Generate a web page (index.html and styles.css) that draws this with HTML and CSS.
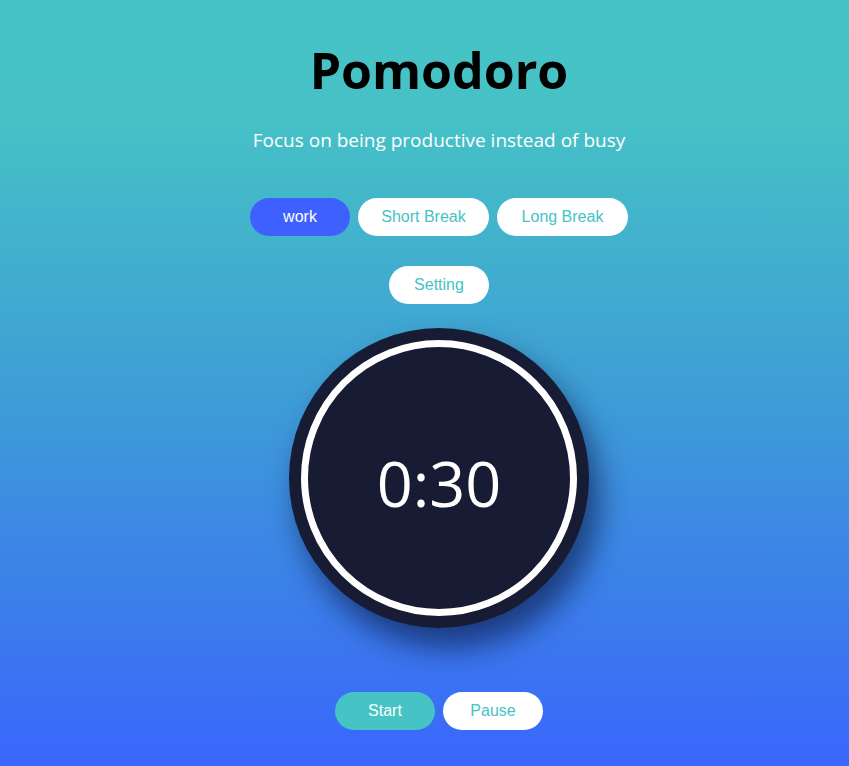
FILE: index.html
```html
<!DOCTYPE html>
<html>
<head>
<meta charset="utf-8">
<title>Pomodoro</title>
<link rel="stylesheet" href="styles.css">
</head>
<body>
<main class="app">
  <h1 class="title">Pomodoro</h1>
  <p class="subtitle">Focus on being productive instead of busy</p>
  <div class="modes">
    <button class="pill pill-active">work</button>
    <button class="pill pill-wide">Short Break</button>
    <button class="pill pill-wide">Long Break</button>
  </div>
  <div class="settings">
    <button class="pill">Setting</button>
  </div>
  <div class="clock">
    <div class="clock-inner">
      <span class="time">0:30</span>
    </div>
  </div>
  <div class="controls">
    <button class="pill pill-start">Start</button>
    <button class="pill">Pause</button>
  </div>
</main>
</body>
</html>
```

FILE: styles.css
```css
html, body {
  margin: 0;
  padding: 0;
}
body {
  min-height: 766px;
  background: linear-gradient(to bottom, #46c3c5 0%, #46c2c6 15%, #3e9fd5 50%, #3a66fb 100%);
  font-family: "Open Sans", "Noto Sans", sans-serif;
}
.app {
  display: flex;
  flex-direction: column;
  align-items: center;
  padding: 38px 0 0 29px;
  height: 728px;
}
.title {
  margin: 0;
  font-size: 50px;
  line-height: 64px;
  font-weight: 700;
  color: #000;
}
.subtitle {
  margin: 24px 0 0;
  font-size: 19px;
  line-height: 28px;
  color: #fff;
}
.modes {
  display: flex;
  gap: 8px;
  margin-top: 44px;
}
.settings {
  margin-top: 30px;
}
.pill {
  width: 100px;
  height: 38px;
  border: none;
  border-radius: 19px;
  background: #fff;
  color: #45c3c5;
  font-family: "Liberation Sans", Arial, sans-serif;
  font-size: 16px;
  padding: 0;
  cursor: pointer;
}
.pill-wide {
  width: 131px;
}
.pill-active {
  background: #3d60fe;
  color: #fff;
}
.pill-start {
  background: #45c3c5;
  color: #fff;
}
.clock {
  margin-top: 24px;
  width: 300px;
  height: 300px;
  border-radius: 50%;
  background: #171b34;
  display: flex;
  align-items: center;
  justify-content: center;
  box-shadow: 10px 20px 30px rgba(10, 25, 70, 0.65);
}
.clock-inner {
  width: 262px;
  height: 262px;
  border: 7px solid #fff;
  border-radius: 50%;
  display: flex;
  align-items: center;
  justify-content: center;
}
.time {
  color: #fff;
  font-size: 63px;
  font-weight: 400;
  line-height: 1;
  margin-top: 8px;
}
.controls {
  display: flex;
  gap: 8px;
  margin-top: 64px;
}
```
